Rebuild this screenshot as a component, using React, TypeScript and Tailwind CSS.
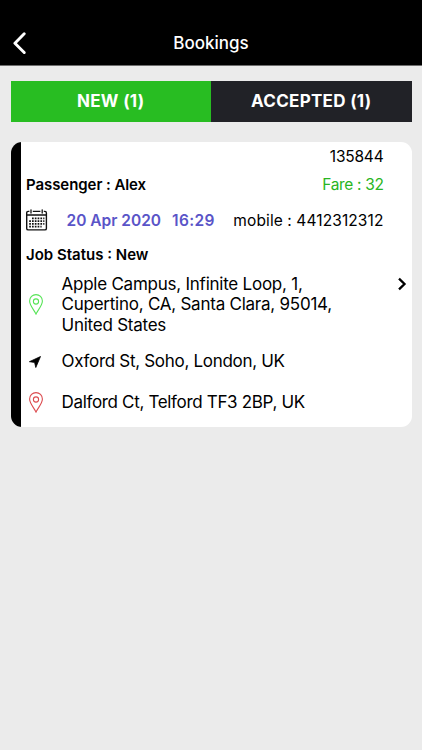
import React from 'react';

type Stop = {
  kind: 'pickup' | 'via' | 'dropoff';
  lines: string[];
  rowClass: string;
  textClass: string;
};

const STOPS: Stop[] = [
  {
    kind: 'pickup',
    lines: ['Apple Campus, Infinite Loop, 1,', 'Cupertino, CA, Santa Clara, 95014,', 'United States'],
    rowClass: 'h-[62px]',
    textClass: 'tracking-[-0.24px]',
  },
  {
    kind: 'via',
    lines: ['Oxford St, Soho, London, UK'],
    rowClass: 'mt-[11px] h-[30px]',
    textClass: 'tracking-[-0.3px]',
  },
  {
    kind: 'dropoff',
    lines: ['Dalford Ct, Telford TF3 2BP, UK'],
    rowClass: 'mt-[11px] h-[30px]',
    textClass: 'tracking-[-0.33px]',
  },
];

function BackIcon() {
  return (
    <svg width="14" height="22" viewBox="0 0 14 22" fill="none" className="block">
      <path d="M12.2 1.8 2.9 11.2l9.3 9.4" stroke="#fff" strokeWidth="2.9" strokeLinecap="round" strokeLinejoin="round" />
    </svg>
  );
}

function CalendarIcon() {
  return (
    <svg width="22" height="22" viewBox="0 0 22 22" fill="none" className="block">
      <path
        d="M3.4 2.4H2.2Q.7 2.4.7 3.9V19.4Q.7 20.9 2.2 20.9H18.9Q20.4 20.9 20.4 19.4V3.9Q20.4 2.4 18.9 2.4H17.8M6.8 2.4h7.6M.7 6h19.7"
        stroke="#111"
        strokeWidth="1.4"
      />
      <path d="M5 .8v3.2M16.2 .8v3.2" stroke="#111" strokeWidth="1.3" strokeLinecap="round" />
      {/* day dots */}
      <path d="M6 9.3h12.4M3.2 12.1h15.2M3.2 14.9h15.2M3.2 17.7h12.4" stroke="#111" strokeWidth="1.7" strokeDasharray="1.7 1.1" />
    </svg>
  );
}

function PinIcon({ color }: { color: string }) {
  return (
    <svg width="14" height="21" viewBox="0 0 14 21" fill="none" stroke={color} className="block">
      <path d="M7 20.1C5.3 16.1.6 11.5.6 7a6.4 6.4 0 0 1 12.8 0C13.4 11.5 8.7 16.1 7 20.1Z" strokeWidth="1.1" />
      <circle cx="7" cy="7.5" r="2.6" strokeWidth="1.1" />
    </svg>
  );
}

function ArrowIcon() {
  return (
    <svg width="12" height="12" viewBox="0 0 12 12" className="block">
      <path d="M11.5.5.4 5.7 5.6 6.4l1.2 5.1Z" fill="#000" stroke="#000" strokeWidth=".8" strokeLinejoin="round" />
    </svg>
  );
}

function StopIcon({ kind }: { kind: Stop['kind'] }) {
  if (kind === 'via') return <ArrowIcon />;
  return <PinIcon color={kind === 'pickup' ? '#57e457' : '#dc4c50'} />;
}

export default function App() {
  return (
    <div className="h-[750px] w-[422px] overflow-hidden bg-[#ebebeb] font-['Inter',sans-serif] text-black">
      <header className="grid h-[66px] grid-cols-[60px_1fr_60px] items-end border-b border-[#6d6d6d] bg-black pb-[11px]">
        <button className="pl-3" aria-label="Back">
          <BackIcon />
        </button>
        <h1 className="text-center text-[17px] leading-[22px] font-medium text-white">Bookings</h1>
      </header>

      <main className="pt-[14.5px] pr-[10.5px] pl-[10.5px]">
        <div className="grid h-[41px] grid-cols-2 text-center text-[17px] leading-[41px] font-bold tracking-[0.3px] text-white">
          <button className="bg-[#28bd22]">NEW (1)</button>
          <button className="bg-[#212227]">ACCEPTED (1)</button>
        </div>

        <section className="mt-5 flex h-[285.5px] overflow-hidden rounded-[11px] bg-white">
          <div className="w-[10.5px] shrink-0 bg-black" />
          <div className="flex-1 pl-[5px]">
            <div className="flex h-[29px] justify-end pr-7 text-[15.5px] leading-[29px] tracking-[-0.2px]">
              <span>135844</span>
            </div>
            <div className="flex h-7 justify-between pr-7 text-[15px] leading-7">
              <span className="font-semibold tracking-[-0.07px]">Passenger : Alex</span>
              <span className="text-[15.5px] tracking-[-0.35px] text-[#28b522]">Fare : 32</span>
            </div>
            <div className="flex h-[44px] items-center pr-7 text-[15.5px]">
              <div className="-mt-0.5 -ml-[0.5px]">
                <CalendarIcon />
              </div>
              <span className="ml-[19px] font-semibold text-[#5a54c8]">20 Apr 2020</span>
              <span className="ml-[11px] font-semibold tracking-[0.35px] text-[#5a54c8]">16:29</span>
              <span className="ml-auto tracking-[0.1px]">mobile : 4412312312</span>
            </div>
            <div className="h-[24px] text-[15px] leading-[23px] font-semibold">Job Status : New</div>

            <div className="mt-[7px] flex">
              <div className="flex-1">
                {STOPS.map(stop => (
                  <div key={stop.kind} className={`flex items-center ${stop.rowClass}`}>
                    <div className="flex w-[35.5px] shrink-0 pl-[3px]">
                      <StopIcon kind={stop.kind} />
                    </div>
                    <div className={`text-[17px] leading-[20.5px] whitespace-nowrap ${stop.textClass}`}>
                      {stop.lines.map(line => (
                        <p key={line}>{line}</p>
                      ))}
                    </div>
                  </div>
                ))}
              </div>
              <svg width="10" height="14" viewBox="0 0 10 14" fill="none" className="mt-[3px] mr-[5px] shrink-0">
                <path d="m2 1.7 5.5 5.3L2 12.3" stroke="#000" strokeWidth="2.3" />
              </svg>
            </div>
          </div>
        </section>
      </main>
    </div>
  );
}
